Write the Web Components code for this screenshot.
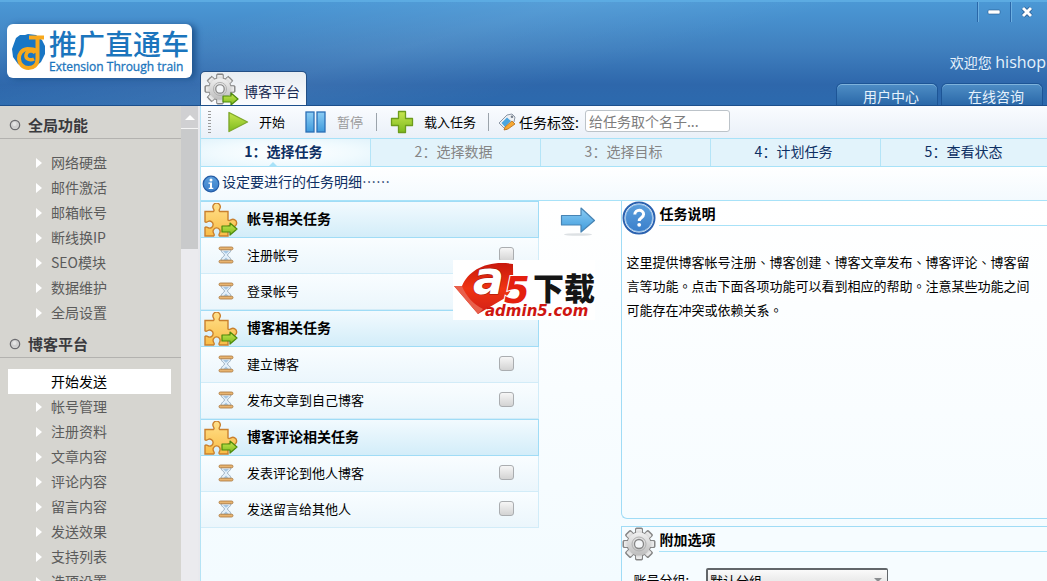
<!DOCTYPE html>
<html lang="zh-CN">
<head>
<meta charset="utf-8">
<title>推广直通车</title>
<style>
html, body { height: 100%; margin: 0; }
body { overflow: hidden; font: 13px/20px "Liberation Sans", "Noto Sans CJK SC", sans-serif; color: #000; background: #f6fcff; }
</style>
</head>
<body>
<app-shell>
  <app-header slot="header"></app-header>
  <side-menu slot="side">
    <menu-group heading="全局功能" items="网络硬盘,邮件激活,邮箱帐号,断线换IP,SEO模块,数据维护,全局设置"></menu-group>
    <menu-group heading="博客平台" current="开始发送" items="开始发送,帐号管理,注册资料,文章内容,评论内容,留言内容,发送效果,支持列表,选项设置"></menu-group>
  </side-menu>
  <tool-bar></tool-bar>
  <step-bar></step-bar>
  <info-bar>设定要进行的任务明细……</info-bar>
  <work-area>
    <task-group slot="tasks" heading="帐号相关任务">
      <task-row>注册帐号</task-row>
      <task-row>登录帐号</task-row>
    </task-group>
    <task-group slot="tasks" heading="博客相关任务">
      <task-row>建立博客</task-row>
      <task-row>发布文章到自己博客</task-row>
    </task-group>
    <task-group slot="tasks" heading="博客评论相关任务">
      <task-row>发表评论到他人博客</task-row>
      <task-row>发送留言给其他人</task-row>
    </task-group>
    <side-panel slot="panels" class="help" heading="任务说明" icon="help">
      <help-text>这里提供博客帐号注册、博客创建、博客文章发布、博客评论、博客留言等功能。点击下面各项功能可以看到相应的帮助。注意某些功能之间可能存在冲突或依赖关系。</help-text>
    </side-panel>
    <side-panel slot="panels" heading="附加选项" icon="gear">
      <option-field></option-field>
    </side-panel>
  </work-area>
  <site-mark slot="overlay"></site-mark>
</app-shell>

<script>
const GEAR = (() => {
  let teeth = '';
  for (let i = 0; i < 8; i++) teeth += `<rect x="13.5" y="1" width="7" height="8" rx="1" transform="rotate(${i * 45} 17 17)"/>`;
  return `<g fill="#858585" stroke="#858585" stroke-width="1">${teeth}<circle cx="17" cy="17" r="12"/></g>
    <g fill="url(#gg)">${teeth.replace(/width="7"/g, 'width="6"').replace(/x="13.5"/g, 'x="14"').replace(/y="1"/g, 'y="2"')}<circle cx="17" cy="17" r="11.5"/></g>
    <circle cx="17" cy="17" r="7" fill="none" stroke="#b0b0b0"/><circle cx="17" cy="17" r="4.5" fill="#f4f6f8" stroke="#858585" stroke-width="1.3"/>`;
})();
const GO = (x, y) => `<path transform="translate(${x} ${y})" d="M1 4h8V1l7 6-7 6v-3H1z" fill="url(#go)" stroke="#4d8a0c" stroke-width="1.2" stroke-linejoin="round"/>`;
const DEFS = `<defs>
  <linearGradient id="gg" x1="0" y1="0" x2="0" y2="1"><stop offset="0" stop-color="#f0f0f0"/><stop offset="1" stop-color="#bdbdbd"/></linearGradient>
  <linearGradient id="go" x1="0" y1="0" x2="0" y2="1"><stop offset="0" stop-color="#c8e650"/><stop offset="1" stop-color="#7dbb1e"/></linearGradient>
  <linearGradient id="bl" x1="0" y1="0" x2="0" y2="1"><stop offset="0" stop-color="#8ccdf4"/><stop offset="1" stop-color="#3f9bdc"/></linearGradient>
  <linearGradient id="dk" x1="0" y1="0" x2="0" y2="1"><stop offset="0" stop-color="#5c9fdc"/><stop offset="1" stop-color="#3a7fcb"/></linearGradient>
  <linearGradient id="pz" x1="0" y1="0" x2="0" y2="1"><stop offset="0" stop-color="#ffe08a"/><stop offset="1" stop-color="#f9bd48"/></linearGradient>
  <linearGradient id="rd" x1="0" y1="0" x2="0" y2="1"><stop offset="0" stop-color="#c8180c"/><stop offset=".5" stop-color="#f03412"/><stop offset="1" stop-color="#d02018"/></linearGradient>
</defs>`;
const ICONS = {
  gear: [34, 34, GEAR],
  gearGo: [36, 34, `<g transform="scale(.94)">${GEAR}</g>` + GO(18, 19)],
  play: [22, 22, '<path d="M2 1.5v19L20.500 11z" fill="url(#go)" stroke="#7fa82c" stroke-width="1.4" stroke-linejoin="round"/>'],
  pause: [22, 22, '<rect x="1" y="1" width="8" height="20" fill="url(#bl)" stroke="#2b6fb5" stroke-width="1.3"/><rect x="12" y="1" width="8" height="20" fill="url(#bl)" stroke="#2b6fb5" stroke-width="1.300"/>'],
  plus: [24, 24, '<path d="M8.500 1.500h7v7h7v7h-7v7h-7v-7h-7v-7h7z" fill="url(#go)" stroke="#6d9c1c" stroke-width="1.300" stroke-linejoin="round"/>'],
  tag: [18, 18, '<path d="M1 10 9 2l5-1 3 3-1 5-8 8z" fill="#eef0f3" stroke="#8c97a5"/><path d="M3.500 10 9 4.500 13 8l-6 6z" fill="#4aa6e0"/><circle cx="14" cy="3.800" r="1.300" fill="#77818d"/><path d="m7 14 7-6 3 3-7 5-4 1z" fill="#f7a832" stroke="#b56e1c" stroke-width=".8"/>'],
  info: [18, 18, '<circle cx="9" cy="9" r="7.800" fill="url(#dk)" stroke="#245ca6" stroke-width="1.200"/><circle cx="9" cy="5" r="1.500" fill="#fff"/><path d="M6.500 7.500h3.500v5.200h1.300v1.300H6.700v-1.300H8V8.800H6.500z" fill="#fff"/>'],
  help: [34, 34, '<circle cx="17" cy="17" r="15.500" fill="#fff" stroke="#2a62b0" stroke-width="2"/><circle cx="17" cy="17" r="13.700" fill="url(#dk)" stroke="#9cc6ec"/><path d="M12.800 13.600c0-5.600 8.800-5.600 8.800-.3 0 3.600-4.400 3.100-4.400 6.600" fill="none" stroke="#fff" stroke-width="3"/><circle cx="17.200" cy="23.800" r="1.900" fill="#fff"/>'],
  puzzle: [36, 34, '<path d="M2 8.500h8.500c1.200-1 .3-2-.2-3a3.700 3.700 0 1 1 6.600 0c-.5 1-1.400 2-.2 3H25v8.500c1 1.200 2.200.3 3-.2a3.800 3.800 0 1 1 0 6.600c-.8-.5-2-1.400-3-.2V33h-8.500c-1.200-1-.3-2 .2-3a3.500 3.500 0 1 0-6.200 0c.5 1 1.400 2 .2 3H2v-8.500c1-1.200 2-.3 3 .2a3.500 3.500 0 1 0 0-6.200c-1 .5-2 1.400-3 .2z" fill="url(#pz)" stroke="#c9802e" stroke-width="1.400"/>' + GO(18, 19)],
  hourglass: [16, 18, '<path d="M3 3c0 4 3.500 4.500 3.500 6S3 11 3 15h10c0-4-3.500-4.500-3.500-6S13 7 13 3z" fill="#e4f0fa" stroke="#93a9bc"/><path d="M5 5h6L8.500 7.500h-1zM5 14.500l3-3 3 3z" fill="#a5c6e2"/><rect x="1" y="1" width="14" height="2.800" rx="1.400" fill="#e8b470" stroke="#a8753a" stroke-width=".8"/><rect x="1" y="14.200" width="14" height="2.800" rx="1.400" fill="#e8b470" stroke="#a8753a" stroke-width=".8"/>'],
  arrow: [36, 32, '<ellipse cx="18" cy="28.500" rx="14" ry="1.300" fill="#dde1e4"/><path d="M1.500 9.500H21V2l13.500 12.500L21 26v-7H1.500z" fill="url(#bl)" stroke="#4784b4" stroke-width="1.200" stroke-linejoin="round"/>'],
  bullet: [12, 12, '<circle cx="6" cy="6" r="4.700" fill="#cfcfcf" stroke="#6c6c70" stroke-width="1.200"/><circle cx="5.500" cy="5" r="2" fill="#e4e4e4"/>'],
  caret: [6, 10, '<path d="M0 0v10l6-5z" fill="#fff"/>'],
  logo: [38, 40, '<path d="M6 7l4-3 5 0 3-1 8 1 6 5 3 6 0 8-4 8-6 5-10 1-7-4-5-7-1-8z" fill="#1976c4"/><path d="M25 22c-2-3-8-3-9 2-.6 4 4 6 8 4" fill="none" stroke="#f8a81c" stroke-width="3.500"/><path d="M27.500 7v21c0 6-4 9-9 9-12 0-13-18-1-19 3 0 6 0 9 2M19 6.500h15" fill="none" stroke="#f8a81c" stroke-width="4"/>']
};

// Builds an element class from its styles and markup.
function define(name, css, html) {
  customElements.define(name, class extends HTMLElement {
    constructor() {
      super();
      this.attachShadow({ mode: 'open' });
    }
    connectedCallback() {
      const t = document.createElement('template');
      t.innerHTML = `<style>*{box-sizing:border-box}${css}</style>${typeof html === 'function' ? html(this) : html}`;
      this.shadowRoot.replaceChildren(t.content.cloneNode(true));
    }
  });
}

define('ui-icon', ':host{display:inline-block;flex:none;line-height:0}svg{display:block}', el => {
  const [w, h, body] = ICONS[el.getAttribute('name')];
  return `<svg width="${w}" height="${h}" viewBox="0 0 ${w} ${h}" aria-hidden="true">${DEFS}${body}</svg>`;
});

define('app-shell', `
  :host{display:grid;height:100vh;grid-template:106px minmax(0,1fr)/200px minmax(0,1fr);overflow:hidden;position:relative}
  header{grid-column:1/3;min-width:0}
  main{display:flex;flex-direction:column;min-width:0;overflow:hidden;border-left:1px solid #b5e3f5}
  aside{overflow:hidden;min-height:0}`,
  '<header><slot name="header"></slot></header><aside><slot name="side"></slot></aside><main><slot></slot></main><slot name="overlay"></slot>');

define('app-header', `
  :host{display:flex;align-items:flex-end;box-sizing:border-box;height:106px;padding-right:4px;color:#e6f2fc;
    background:linear-gradient(165deg,#ffffff00 20%,#ffffff10 40%,#ffffff00 60%),linear-gradient(#4b98d5,#4080bf 45%,#2e67ab 80%,#2c6aae);
    border-top:2px solid #5cabe2;border-bottom:1px solid #1c4f8c;overflow:hidden}
  brand-logo{margin:0 8px 27px 7px}
  .tab{display:flex;align-items:center;gap:4px;width:107px;height:34px;padding:2px 0 0 3px;border:1px solid #234f85;border-bottom:0;border-radius:5px 5px 0 0;
    background:linear-gradient(#e8edf2,#fbfcfe);font:14px "Noto Sans CJK SC",sans-serif;color:#1b2a52;white-space:nowrap}
  .tab span{margin-top:2px}
  .right{margin-left:auto;display:flex;flex-direction:column;align-items:flex-end;align-self:stretch}
  .win{display:flex}
  .win button{width:33px;height:20px;padding:0;border:0;border-left:1px solid #2a67a8;box-shadow:inset 1px 0 #6db0e2;background:none;display:grid;place-items:center}
  p{margin:30px -3px 0 0;font:14px/20px "Open Sans","Noto Sans CJK SC",sans-serif}
  p b{font-weight:400;font-size:16px}
  nav{display:flex;gap:3px;margin-top:auto}
  nav a{width:102px;height:22px;padding:2px 0 0 26px;border:1px solid #1d5596;border-bottom:0;border-radius:6px 6px 0 0;box-shadow:inset 0 1px #7fb3dc;
    background:linear-gradient(#4f8ec6,#2a68a8);color:#e6f2fc;text-decoration:none;font:14px/20px "Noto Sans CJK SC",sans-serif;white-space:nowrap}`,
  `<brand-logo></brand-logo>
   <button class="tab"><ui-icon name="gearGo"></ui-icon><span>博客平台</span></button>
   <div class="right">
     <div class="win">
       <button aria-label="最小化"><svg width="14" height="6"><rect x="1" y="1" width="12" height="4" rx="1" fill="#fff" stroke="#24588f" stroke-width=".6"/></svg></button>
       <button aria-label="关闭"><svg width="12" height="12"><path d="M2 2l8 8M10 2l-8 8" stroke="#24588f" stroke-width="4.500"/><path d="M2 2l8 8M10 2l-8 8" stroke="#fff" stroke-width="3"/></svg></button>
     </div>
     <p>欢迎您 <b>hishop</b></p>
     <nav><a href="#user">用户中心</a><a href="#chat">在线咨询</a></nav>
   </div>`);

define('brand-logo', `
  :host{display:flex;align-items:center;box-sizing:border-box;width:185px;height:54px;padding-left:3px;border-radius:6px;background:#fff;box-shadow:4px 1px 6px #1f5590;color:#1b75bd}
  ui-icon{margin-right:1px}
  strong{display:block;font:500 28px/32px "Noto Sans CJK SC",sans-serif;white-space:nowrap}
  small{display:block;font:12px/16px "Open Sans",sans-serif;white-space:nowrap;-webkit-text-stroke:.3px #1b75bd}`,
  '<ui-icon name="logo"></ui-icon><div><strong>推广直通车</strong><small>Extension Through train</small></div>');

define('side-menu', `
  :host{display:grid;box-sizing:border-box;grid-template-columns:minmax(0,1fr) 17px;height:100%;padding-right:2px;background:#e9e9ed}
  nav{background:#d6d5d0;overflow:hidden}
  .bar{background:#ebebee}
  .up{height:23px;border-bottom:1px solid #f5f5f5;background:#d0d0d2;display:grid;place-items:center}
  .up::before{content:"";border:5px solid transparent;border-top:0;border-bottom-color:#fff}
  .thumb{height:120px;background:#c9cacb}`,
  '<nav><slot></slot></nav><div class="bar"><div class="up"></div><div class="thumb"></div></div>');

define('menu-group', `
  :host{display:block}
  h2{display:flex;align-items:center;gap:7px;margin:0;padding:6px 0 0 9px;border-bottom:1px solid #b3b2af;font:700 15px/26px "Noto Sans CJK SC",sans-serif;color:#3a3a3e}
  ul{list-style:none;margin:0;padding:11px 10px 0 8px}
  a{display:grid;grid-template-columns:15px 1fr;align-items:center;height:25px;padding-left:28px;color:#5b5b5b;text-decoration:none;font:14px/25px "Noto Sans CJK SC",sans-serif}
  a[aria-current]{background:#fff;color:#000}
  a[aria-current] ui-icon{visibility:hidden}`,
  el => `<h2><ui-icon name="bullet"></ui-icon>${el.getAttribute('heading')}</h2><ul>${el.getAttribute('items').split(',').map(t =>
    `<li><a href="#${t}"${t === el.getAttribute('current') ? ' aria-current="page"' : ''}><ui-icon name="caret"></ui-icon><span>${t}</span></a></li>`).join('')}</ul>`);

define('tool-bar', `
  :host{display:flex;align-items:center;box-sizing:border-box;flex:none;height:32px;padding-left:7px;background:linear-gradient(#fafcff,#eaf0f8)}
  .grip{width:3px;height:22px;margin-right:16px;background:repeating-linear-gradient(#999 0 1px,transparent 1px 3px)}
  button{display:flex;align-items:center;gap:10px;padding:0;margin-right:20px;border:0;background:none;font:13px/20px "Noto Sans CJK SC",sans-serif;color:#000;white-space:nowrap}
  button:disabled{color:#9a9a9a;margin-right:13px}
  button:last-of-type{margin-right:12px}
  i{width:1px;height:18px;background:#9ba3ab;margin-right:13px}
  i:last-of-type{margin-right:9px}
  label{font:14px/20px "Noto Sans CJK SC",sans-serif;margin:0 6px 0 3px;white-space:nowrap}
  input{width:145px;height:22px;margin-bottom:3px;padding:0 3px;border:1px solid #bcc3c9;border-radius:3px;background:#fff;font:14px "Noto Sans CJK SC",sans-serif}
  input::placeholder{color:#7d7d7d;opacity:1}`,
  `<div class="grip"></div>
   <button><ui-icon name="play"></ui-icon>开始</button>
   <button disabled><ui-icon name="pause"></ui-icon>暂停</button><i></i>
   <button><ui-icon name="plus"></ui-icon>载入任务</button><i></i>
   <ui-icon name="tag"></ui-icon><label for="tag">任务标签:</label><input id="tag" placeholder="给任务取个名子...">`);

define('step-bar', `
  :host{display:block;flex:none}
  ol{display:grid;grid-template-columns:repeat(5,minmax(170px,1fr));list-style:none;margin:0;padding:0;border:solid #a8e2f8;border-width:1px 0;background:#e2f3fb}
  li{position:relative;height:27px;padding-right:4px;text-align:center;font:14px/24px "Noto Sans CJK SC",sans-serif;color:#0d2f63;border-right:1px solid #b4e4f7;white-space:nowrap}
  .off{color:#858585}
  .on{font-weight:700;background:radial-gradient(#fff,#f0fafe 60%,#e2f3fb)}
  .on::after{content:"";position:absolute;left:68px;bottom:0;border:4px solid transparent;border-top:0;border-bottom-color:#a8e2f8}`,
  '<ol><li class="on" aria-current="step">1：选择任务</li><li class="off">2：选择数据</li><li class="off">3：选择目标</li><li>4：计划任务</li><li>5：查看状态</li></ol>');

define('info-bar', `
  :host{display:flex;align-items:center;box-sizing:border-box;gap:2px;flex:none;height:34px;padding-left:1px;background:linear-gradient(#fff,#f3fafe);border-bottom:1px solid #a8e2f8;font:14px/20px "Noto Sans CJK SC",sans-serif;color:#0d2f63}
  span{margin-bottom:5px}`,
  '<ui-icon name="info"></ui-icon><span><slot></slot></span>');

define('work-area', `
  :host{display:grid;grid-template-columns:40% 82px minmax(0,1fr);flex:1;min-height:0;background:linear-gradient(#fff,#f3fbff)}
  .go{display:grid;justify-items:center;align-content:start;padding:5px 4px 0 0}
  .go button{border:0;padding:0;background:none}
  .panels{display:flex;flex-direction:column;gap:7px}`,
  '<div><slot name="tasks"></slot></div><div class="go"><button aria-label="下一步"><ui-icon name="arrow"></ui-icon></button></div><div class="panels"><slot name="panels"></slot></div>');

define('task-group', `
  :host{display:block}
  h3{display:flex;align-items:center;gap:8px;height:37px;margin:0;padding-left:2px;border:1px solid #a0dcf6;border-left:0;background:linear-gradient(#f2fafe,#d3edf9);font:700 14px/20px "Noto Sans CJK SC",sans-serif}
  h3 span{margin-bottom:4px}`,
  el => `<h3><ui-icon name="puzzle"></ui-icon><span>${el.getAttribute('heading')}</span></h3><slot></slot>`);

define('task-row', `
  :host{display:block}
  label{display:flex;align-items:center;height:36px;padding:0 24px 2px 17px;border:solid #d2ecf8;border-width:0 1px 1px 0;background:linear-gradient(#f9fdff,#ebf6fc);font:13px/20px "Noto Sans CJK SC",sans-serif}
  span{flex:1;margin-left:13px}
  input{appearance:none;width:15px;height:15px;margin:0;border:1px solid #aaadb0;border-radius:3px;background:linear-gradient(#f6f6f6,#d3d3d3)}`,
  '<label><ui-icon name="hourglass"></ui-icon><span><slot></slot></span><input type="checkbox"></label>');

define('side-panel', `
  :host{display:block;box-sizing:border-box;flex:none;border-left:1px solid #a0dcf6;border-top:1px solid #a0dcf6;background:#f6fcff;min-height:90px}
  :host(.help){min-height:318px;border-top:0;border-bottom:1px solid #a0dcf6;border-bottom-left-radius:6px;background:linear-gradient(#fff,#f6fcff)}
  header{display:flex;align-items:flex-start;gap:3px;height:34px}
  h3{flex:1;height:25px;margin:0;border-bottom:1px solid #a8e2f8;font:700 14px/25px "Noto Sans CJK SC",sans-serif}`,
  el => `<header><ui-icon name="${el.getAttribute('icon')}"></ui-icon><h3>${el.getAttribute('heading')}</h3></header><slot></slot>`);

define('help-text', `
  :host{display:block;padding:15px 12px 0 4px}
  p{margin:0;font:13px/24px "Noto Sans CJK TC","Noto Sans CJK SC",sans-serif}`,
  '<p lang="zh-TW"><slot></slot></p>');

define('option-field', `
  :host{display:flex;align-items:center;gap:17px;padding:7px 0 0 11px}
  label{font:13px/22px "Noto Sans CJK SC",sans-serif}
  .box{display:grid;align-items:center;justify-items:end}
  select{grid-area:1/1;appearance:none;width:182px;height:24px;padding:0 20px 0 2px;border:2px solid #62666a;border-width:2px 1px 1px 2px;border-radius:2px;background:linear-gradient(#fafafa,#dcdcdc);font:13px "Noto Sans CJK SC",sans-serif;color:#000}
  .box::after{content:"";grid-area:1/1;margin-right:6px;border:4px solid transparent;border-bottom:0;border-top-color:#8a8d90;pointer-events:none}`,
  '<label for="group">账号分组:</label><div class="box"><select id="group"><option>默认分组</option></select></div>');

define('site-mark', `
  :host{position:absolute;left:453px;top:260px;width:142px;height:60px;background:#fff}
  svg{display:block}
  text{font-family:"DejaVu Sans","Noto Sans CJK SC",sans-serif;font-weight:700}`,
  `<svg width="142" height="60" viewBox="0 0 142 60" role="img" aria-label="a5">${DEFS}
    <path d="M1 26h8C16 10 34 0 60 4c0 18 2 24-8 34L25 54z" fill="url(#rd)"/>
    <path d="M1 26l24 28 5-5C20 44 13 36 9 26z" fill="#e8604c"/>
    <text x="20" y="34" font-size="46" font-style="italic" fill="#fff" stroke="#9c1208" stroke-width="1" paint-order="stroke">a</text>
    <text x="51" y="43" font-size="37" font-style="italic" fill="#e4200f" stroke="#fff" stroke-width="2" paint-order="stroke">5</text>
    <text x="80" y="40" font-size="31" style="font-family:'Noto Sans CJK SC',sans-serif;font-weight:900" fill="#151515">下载</text>
    <text x="32" y="56" font-size="15" font-style="italic" fill="#cf1510">admin5.com</text>
  </svg>`);
</script>
</body>
</html>
